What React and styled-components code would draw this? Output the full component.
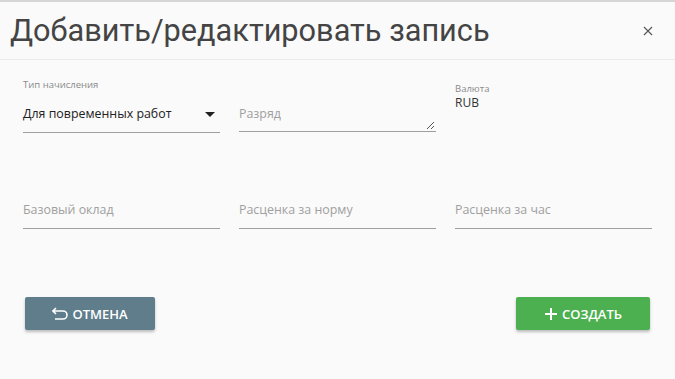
import React from 'react';
import styled, { createGlobalStyle } from 'styled-components';

const GlobalStyle = createGlobalStyle`
  html, body {
    margin: 0;
    padding: 0;
    background-color: #FAFAFA;
  }
  body {
    font-family: "Open Sans", "Noto Sans", sans-serif;
  }
`;

const Dialog = styled.div`
  width: 675px;
  height: 379px;
  box-sizing: border-box;
  background-color: #FAFAFA;
  border-top: 2px solid #D6D6D6;
  display: flex;
  flex-direction: column;
`;

const Header = styled.div`
  height: 58px;
  box-sizing: border-box;
  border-bottom: 1px solid #EBEBEB;
  display: flex;
  align-items: center;
  justify-content: space-between;
  padding: 0 20px 0 10px;
`;

const Title = styled.h1`
  margin: 0;
  font-family: Roboto, "Liberation Sans", sans-serif;
  font-weight: 400;
  font-size: 30.7px;
  color: #444444;
`;

const CloseButton = styled.button`
  border: none;
  background: none;
  padding: 0;
  width: 14px;
  height: 14px;
  display: flex;
  align-items: center;
  justify-content: center;
  cursor: pointer;
`;

const Body = styled.div`
  padding: 15px 23px 0 23px;
  display: grid;
  grid-template-columns: repeat(3, 197px);
  column-gap: 19px;
  grid-template-rows: 58px 96px;
`;

const Field = styled.div`
  display: flex;
  flex-direction: column;
  justify-content: flex-end;
  align-self: ${p => (p.top ? 'start' : 'end')};
  margin-bottom: ${p => (p.lift ? `${p.lift}px` : '0')};
`;

const SmallLabel = styled.div`
  font-size: 9.5px;
  color: #8A8A8A;
  line-height: 12px;
  margin-top: ${p => (p.mt ? `${p.mt}px` : '0')};
  margin-bottom: ${p => (p.mb ? `${p.mb}px` : '0')};
`;

const Line = styled.div`
  position: relative;
  display: flex;
  align-items: center;
  justify-content: space-between;
  height: 18px;
  line-height: 18px;
  padding-bottom: 9px;
  border-bottom: 1px solid #9E9E9E;
  font-size: 12.4px;
  color: ${p => (p.$placeholder ? '#A0A0A0' : '#212121')};
`;

const Value = styled.div`
  font-size: 12px;
  color: #333333;
  line-height: 16px;
`;

const Resize = styled.svg`
  position: absolute;
  right: 1px;
  bottom: 1px;
`;

const Footer = styled.div`
  margin-top: auto;
  margin-bottom: 49px;
  padding: 0 25px;
  display: flex;
  justify-content: space-between;
`;

const Button = styled.button`
  height: 33px;
  width: ${p => p.w}px;
  border: none;
  border-radius: 2px;
  background-color: ${p => p.bg};
  color: #FFFFFF;
  font-family: "Open Sans", "Noto Sans", sans-serif;
  font-size: 13px;
  font-weight: 600;
  text-transform: uppercase;
  display: flex;
  align-items: center;
  justify-content: center;
  gap: 4px;
  box-shadow: 0 2px 3px rgba(0, 0, 0, 0.25);
  cursor: pointer;
`;

function App() {
  return (
    <>
      <GlobalStyle />
      <Dialog>
        <Header>
          <Title>Добавить/редактировать запись</Title>
          <CloseButton>
            <svg width="10" height="10" viewBox="0 0 10 10">
              <path d="M1 1 L9 9 M9 1 L1 9" stroke="#555" strokeWidth="1.1" />
            </svg>
          </CloseButton>
        </Header>
        <Body>
          <Field>
            <SmallLabel mb={14}>Тип начисления</SmallLabel>
            <Line>
              <span>Для повременных работ</span>
              <svg width="10" height="5" viewBox="0 0 10 5" style={{ marginRight: 5 }}>
                <path d="M0 0 L10 0 L5 5 Z" fill="#212121" />
              </svg>
            </Line>
          </Field>
          <Field lift={1}>
            <Line $placeholder>
              <span style={{ marginTop: 2 }}>Разряд</span>
              <Resize width="9" height="9" viewBox="0 0 9 9">
                <path d="M8 1 L1 8 M8 5 L5 8" stroke="#555" strokeWidth="1" />
              </Resize>
            </Line>
          </Field>
          <Field top>
            <SmallLabel mt={8}>Валюта</SmallLabel>
            <Value>RUB</Value>
          </Field>
          <Field>
            <Line $placeholder>
              <span>Базовый оклад</span>
            </Line>
          </Field>
          <Field>
            <Line $placeholder>
              <span>Расценка за норму</span>
            </Line>
          </Field>
          <Field>
            <Line $placeholder>
              <span>Расценка за час</span>
            </Line>
          </Field>
        </Body>
        <Footer>
          <Button bg="#607D8B" w={130}>
            <svg width="16" height="14" viewBox="0 0 16 14">
              <path d="M4 1 L1 4 L4 7 M1 4 H11 A4 4 0 0 1 11 12 H3" fill="none" stroke="#fff" strokeWidth="1.6" />
            </svg>
            Отмена
          </Button>
          <Button bg="#4CAF50" w={134}>
            <svg width="14" height="14" viewBox="0 0 14 14">
              <path d="M7 1 V13 M1 7 H13" stroke="#fff" strokeWidth="2" />
            </svg>
            Создать
          </Button>
        </Footer>
      </Dialog>
    </>
  );
}

export default App;
